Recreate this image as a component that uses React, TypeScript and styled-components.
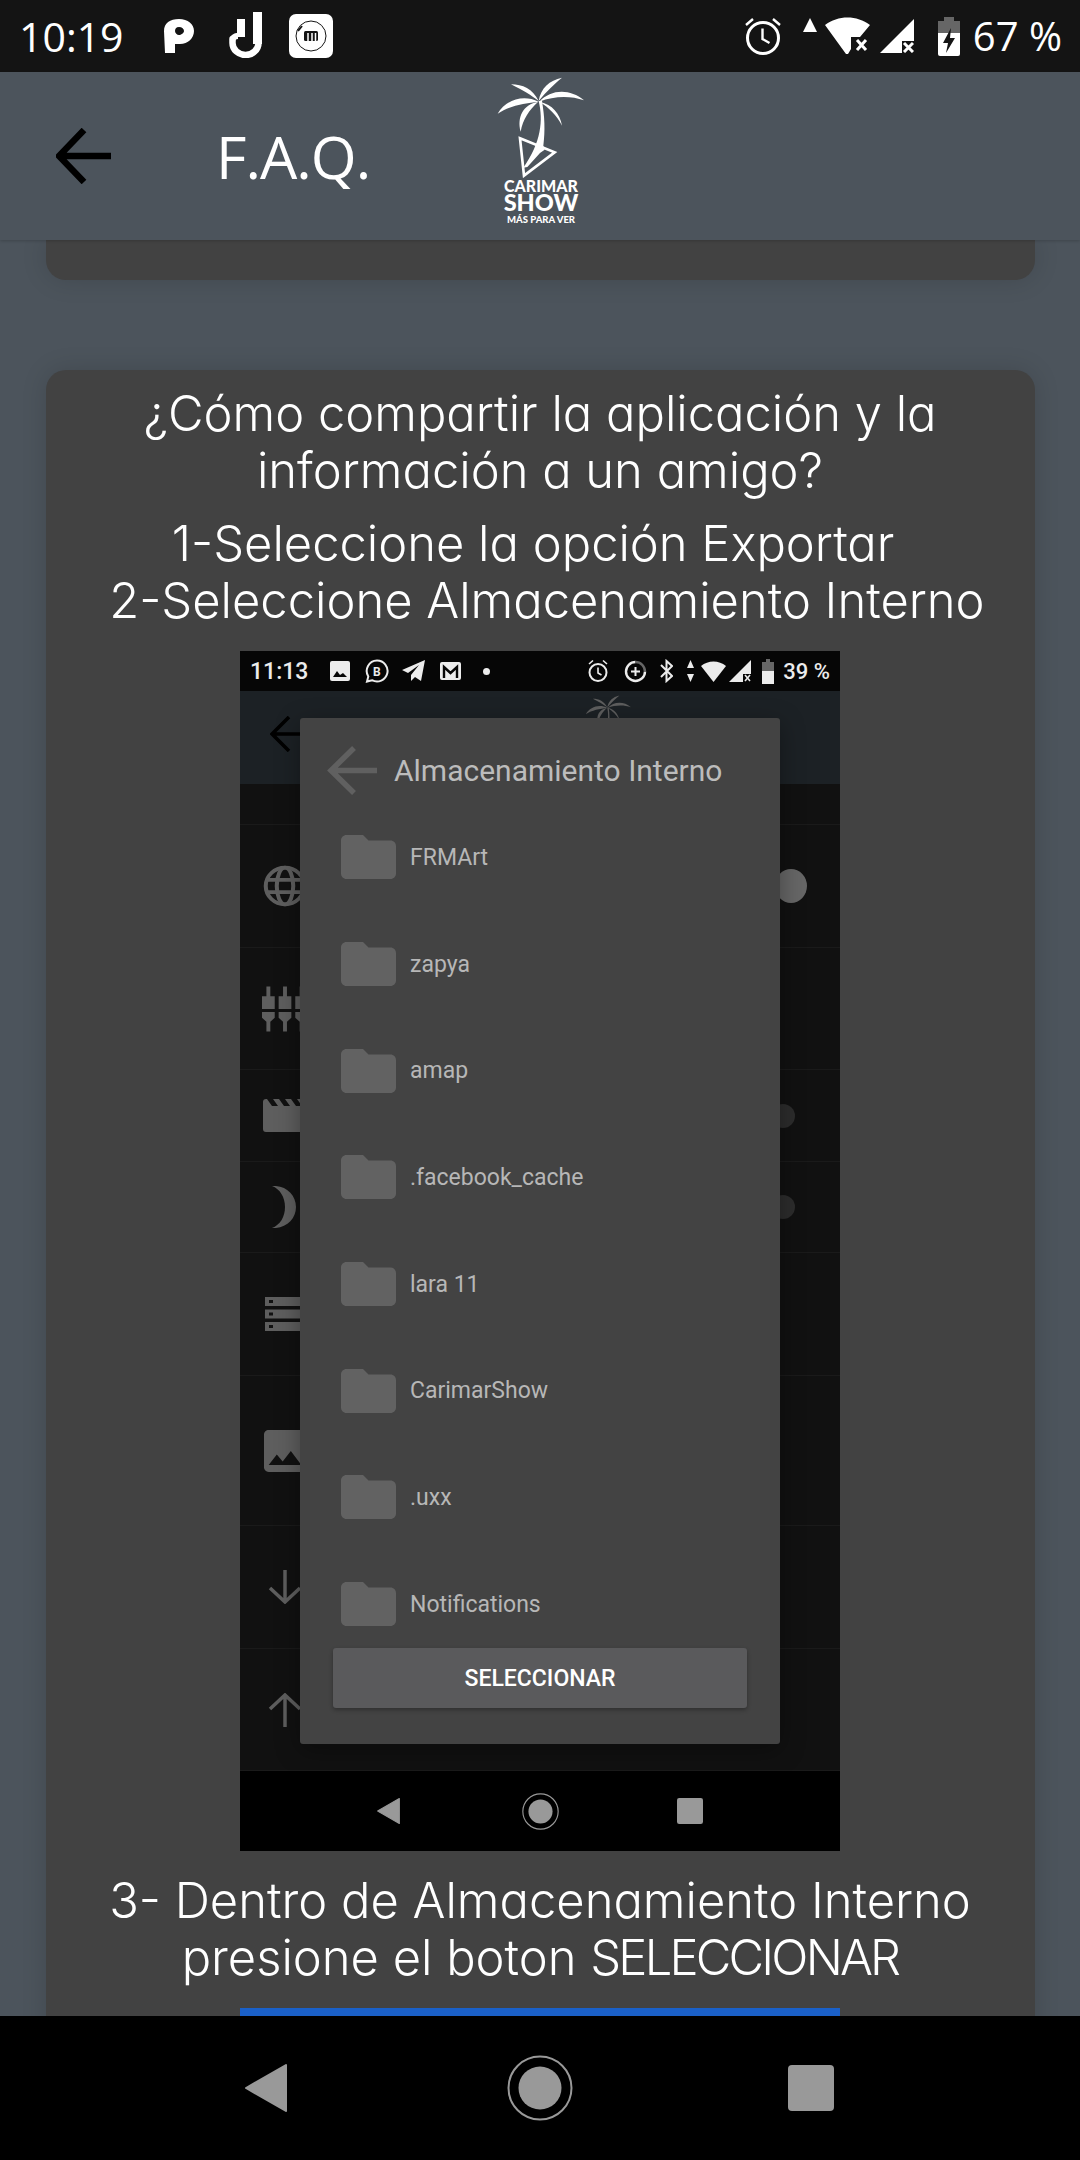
import React from 'react';
import styled, { createGlobalStyle } from 'styled-components';

const GlobalStyle = createGlobalStyle`
  html, body {
    margin: 0;
    padding: 0;
    background: #4c545c;
  }
  * {
    box-sizing: border-box;
  }
`;

const Screen = styled.div`
  width: 1080px;
  height: 2160px;
  display: flex;
  flex-direction: column;
  overflow: hidden;
  background: #4c545c;
  font-family: 'Open Sans', 'Noto Sans', sans-serif;
  color: #fff;
`;

const StatusBar = styled.div`
  height: 72px;
  flex: none;
  background: #141414;
  display: flex;
  align-items: center;
  padding: 0 18px 0 19px;
`;

const Clock = styled.span`
  font-family: 'Open Sans', sans-serif;
  font-size: 41px;
  line-height: 72px;
  width: 105px;
  white-space: nowrap;
`;

const Percent = styled.span`
  font-family: 'Open Sans', sans-serif;
  font-size: 40px;
  line-height: 72px;
  margin-left: 13px;
  white-space: pre;
`;

const StatusGlyph = styled.svg<{ $ml?: number }>`
  flex: none;
  margin-left: ${(p) => p.$ml ?? 0}px;
`;

const Spacer = styled.div`
  flex: 1;
`;

const Header = styled.header`
  height: 168px;
  flex: none;
  background: #4c545c;
  display: grid;
  grid-template-columns: 216px 280px 90px;
  align-items: center;
  position: relative;
  z-index: 2;
  box-shadow: 0 1px 3px rgba(0, 0, 0, 0.18);
`;

const BackButton = styled.div`
  padding-left: 56px;
  display: flex;
  align-items: center;
`;

const Title = styled.h1`
  margin: 0;
  font-family: 'Open Sans', sans-serif;
  font-weight: 400;
  font-size: 59px;
  letter-spacing: -1px;
  line-height: 1;
`;

const Logo = styled.div`
  display: flex;
  flex-direction: column;
  align-items: center;
  width: 90px;
  margin-top: -9px;
`;

const LogoLine = styled.span<{ $size: number; $h: number }>`
  font-family: Lato, 'Liberation Sans', sans-serif;
  font-weight: 900;
  font-size: ${(p) => p.$size}px;
  line-height: ${(p) => p.$h}px;
  white-space: nowrap;
`;

const Content = styled.main`
  flex: 1;
  min-height: 0;
  overflow: hidden;
  padding: 0 45px 0 46px;
`;

const PrevCard = styled.div`
  height: 40px;
  background: #424242;
  border-radius: 0 0 20px 20px;
  box-shadow: 0 0 26px rgba(0, 0, 0, 0.14);
`;

const Card = styled.section`
  margin-top: 90px;
  background: #424242;
  border-radius: 20px 20px 0 0;
  padding: 15px 1px 0 0;
  display: flex;
  flex-direction: column;
  align-items: center;
  box-shadow: 0 0 26px rgba(0, 0, 0, 0.14);
`;

const Copy = styled.p<{ $mt?: number }>`
  margin: ${(p) => p.$mt ?? 0}px 0 0;
  font-family: Inter, 'Noto Sans', sans-serif;
  font-feature-settings: 'cv11' 1;
  font-weight: 300;
  font-size: 48.9px;
  line-height: 57px;
  text-align: center;
  white-space: nowrap;
`;

const Caps = styled.span`
  letter-spacing: -2.8px;
`;

const Shot = styled.div`
  position: relative;
  margin-top: 22px;
  width: 600px;
  height: 1200px;
  flex: none;
  display: flex;
  flex-direction: column;
  background: #111;
  font-family: Roboto, sans-serif;
  overflow: hidden;
`;

const ShotStatus = styled.div`
  height: 40px;
  flex: none;
  background: #060606;
  display: flex;
  align-items: center;
  padding: 0 10px;
  color: #ececec;
`;

const ShotClock = styled.span`
  font-size: 23px;
  width: 60px;
  font-weight: 500;
`;

const ShotPercent = styled.span`
  font-size: 22px;
  font-weight: 500;
  margin-left: 9px;
  white-space: pre;
`;

const ShotHeader = styled.div`
  height: 93px;
  flex: none;
  background: #1c2125;
  display: grid;
  grid-template-columns: 315px 47px;
  padding-left: 30px;
  overflow: hidden;
`;

const ShotBack = styled.div`
  margin-top: 25px;
`;

const ShotPalm = styled.div`
  margin-top: 3px;
`;

const ShotRow = styled.div<{ $h: number }>`
  height: ${(p) => p.$h}px;
  flex: none;
  display: flex;
  align-items: center;
  padding-left: 22px;
  border-bottom: 1px solid #1a1a1a;
  color: #5e5e5e;
`;

const RowIcon = styled.div`
  width: 46px;
  display: flex;
  justify-content: center;
  flex: none;
`;

const Thumb = styled.div<{ $on?: boolean }>`
  margin-left: auto;
  margin-right: ${(p) => (p.$on ? 33 : 45)}px;
  width: ${(p) => (p.$on ? 32 : 24)}px;
  height: ${(p) => (p.$on ? 34 : 24)}px;
  border-radius: 50%;
  background: ${(p) => (p.$on ? '#666' : '#2c2c2c')};
`;

const ShotNav = styled.div`
  height: 80px;
  flex: none;
  background: #000;
  display: grid;
  grid-template-columns: repeat(3, 1fr);
  align-items: center;
  padding: 0 75px;
`;

const NavSlot = styled.div<{ $pr?: number }>`
  display: flex;
  justify-content: center;
  padding-right: ${(p) => p.$pr ?? 0}px;
`;

const Dialog = styled.div`
  position: absolute;
  top: 67px;
  left: 60px;
  width: 480px;
  height: 1026px;
  background: #434343;
  border-radius: 3px;
  box-shadow: 0 6px 24px rgba(0, 0, 0, 0.35);
  display: flex;
  flex-direction: column;
`;

const DialogHead = styled.div`
  height: 86px;
  flex: none;
  display: flex;
  align-items: center;
  padding: 18px 0 0 27px;
  gap: 17px;
`;

const DialogTitle = styled.span`
  font-size: 30px;
  color: #bcbcbc;
  white-space: nowrap;
`;

const FolderList = styled.div`
  flex: 1;
  min-height: 0;
  overflow: hidden;
`;

const FolderRow = styled.div`
  height: 106.7px;
  display: flex;
  align-items: center;
  padding-left: 41px;
  gap: 14px;
  font-size: 23px;
  color: #b7b7b7;
`;

const SelectButton = styled.button`
  flex: none;
  height: 60px;
  margin: 0 33px 36px;
  border: none;
  border-radius: 3px;
  background: #5a5a5c;
  color: #fff;
  font-family: Roboto, sans-serif;
  font-weight: 500;
  font-size: 23px;
  box-shadow: 0 2px 4px rgba(0, 0, 0, 0.3);
`;

const NavBar = styled.nav`
  height: 144px;
  flex: none;
  background: #000;
  display: grid;
  grid-template-columns: repeat(3, 1fr);
  align-items: center;
  padding: 0 134px;
  position: relative;
  z-index: 2;
`;

const BlueBar = styled.div`
  margin-top: 22px;
  width: 600px;
  height: 60px;
  flex: none;
  background: #1a60c8;
`;

const PALM_LEAVES = [
  'M178 92C185 52 210 30 248 22C226 40 202 62 178 92Z',
  'M178 92C160 56 130 42 95 42C130 60 155 74 178 92Z',
  'M180 94C215 56 272 54 314 90C275 76 225 76 180 94Z',
  'M178 94C130 70 78 90 55 130C90 106 135 98 178 94Z',
  'M176 95C132 102 112 140 124 184C130 148 150 118 176 95Z',
  'M182 95C218 102 242 130 248 166C232 134 208 112 182 95Z',
];

const FOLDERS = ['FRMArt', 'zapya', 'amap', '.facebook_cache', 'lara 11', 'CarimarShow', '.uxx', 'Notifications'];

const Folder = () => (
  <svg width="55" height="44" viewBox="2 4 20 16" preserveAspectRatio="none" style={{ flex: 'none' }}>
    <path fill="#626262" d="M10 4H4c-1.1 0-2 .9-2 2v12c0 1.1.9 2 2 2h16c1.1 0 2-.9 2-2V8c0-1.1-.9-2-2-2h-8l-2-2z" />
  </svg>
);

const Triangle = ({ w, h }: { w: number; h: number }) => (
  <svg width={w} height={h} viewBox="0 0 42 48">
    <path fill="#999" stroke="#999" strokeWidth="2" strokeLinejoin="round" d="M41 1L1 24l40 23z" />
  </svg>
);

const HomeRing = ({ size }: { size: number }) => (
  <svg width={size} height={size} viewBox="0 0 66 66">
    <circle cx="33" cy="33" r="31.5" fill="none" stroke="#999" strokeWidth="2" />
    <circle cx="33" cy="33" r="21.5" fill="#999" />
  </svg>
);

const SquareKey = ({ size }: { size: number }) => (
  <svg width={size} height={size} viewBox="0 0 46 46">
    <rect width="46" height="46" rx="4" fill="#999" />
  </svg>
);

const App: React.FC = () => {
  return (
    <Screen>
      <GlobalStyle />
      <StatusBar>
        <Clock>10:19</Clock>
        <StatusGlyph $ml={40} width="30" height="34" viewBox="0 0 30 34">
          <path fill="#fff" fillRule="evenodd" d="M0 12C0 4 6 0 15 0s15 5 15 12-6 13-14 13h-5v9H1zM11 12c0 2 2 4 4 4s5-2 5-4-2-4-5-4-4 2-4 4z" />
        </StatusGlyph>
        <StatusGlyph $ml={35} width="33" height="46" viewBox="0 0 33 46" style={{ marginTop: '-2px' }}>
          <path fill="none" stroke="#fff" strokeWidth="6.5" strokeLinecap="round" d="M3.5 27v4a13 12 0 0 0 26 0" />
          <path fill="#fff" d="M8 7h8v18H8zM24 0h9v32h-9z" />
          <path fill="#fff" d="M1 26c1-3 4-5 8-5v6c-2 0-3 1-3 3z" />
        </StatusGlyph>
        <StatusGlyph $ml={27} width="44" height="44" viewBox="0 0 44 44">
          <rect width="44" height="44" rx="7" fill="#fff" />
          <circle cx="22" cy="22" r="15" fill="none" stroke="#141414" strokeWidth="1" />
          <path stroke="#141414" strokeWidth="2" d="M13 12l-4 5" />
          <rect x="15" y="17" width="14" height="10" rx="1.5" fill="#141414" />
          <path stroke="#fff" strokeWidth="1.5" d="M19 19v8M23 19v8M26.5 19v8" />
        </StatusGlyph>
        <Spacer />
        <StatusGlyph width="38" height="38" viewBox="0 0 38 38">
          <circle cx="19" cy="21" r="15.5" fill="none" stroke="#fff" strokeWidth="3" />
          <path fill="none" stroke="#fff" strokeWidth="2.4" d="M18.5 11.5v10.5l7 4M2 8l7-6M36 8l-7-6" />
        </StatusGlyph>
        <StatusGlyph $ml={21} width="14" height="14" viewBox="0 0 14 14" style={{ marginTop: '-23px' }}>
          <path fill="#fff" d="M7 0l7 14H0z" />
        </StatusGlyph>
        <StatusGlyph $ml={8} width="46" height="38" viewBox="0 0 46 38">
          <path fill="#fff" d="M0 8C13-2 32-2 45 8L35 20h-9v12l-3 5h-2z" />
          <path stroke="#fff" strokeWidth="3" d="M32 23l9 10M41 23l-9 10" />
        </StatusGlyph>
        <StatusGlyph $ml={9} width="34" height="34" viewBox="0 0 34 34">
          <path fill="#fff" d="M34 0v22H22v12H0z" />
          <path stroke="#fff" strokeWidth="3" d="M24 24l9 9M33 24l-9 9" />
        </StatusGlyph>
        <StatusGlyph $ml={24} width="22" height="39" viewBox="0 0 22 39">
          <path fill="#666" d="M6 0h10v4h6v12H0V4h6z" />
          <path fill="#fff" d="M0 16h22v21a2 2 0 0 1-2 2H2a2 2 0 0 1-2-2z" />
          <path fill="#141414" d="M13 11l-8 15h5l-2 10 9-15h-5z" />
        </StatusGlyph>
        <Percent>67 %</Percent>
      </StatusBar>

      <Header>
        <BackButton>
          <svg width="56" height="56" viewBox="0 0 56 56" fill="none" stroke="#000" strokeWidth="6.5">
            <path d="M55 28H5M28 2L3 28l25 26" />
          </svg>
        </BackButton>
        <Title>F.A.Q.</Title>
        <Logo>
          <svg width="90" height="103" viewBox="50 14 270 309">
            {PALM_LEAVES.map((d) => (
              <path key={d} d={d} fill="#fff" />
            ))}
            <path fill="#fff" d="M178 92C192 150 186 215 132 292l12-2 38-42 14-10-4-12C198 180 196 140 188 92Z" />
            <path fill="none" stroke="#fff" strokeWidth="8" d="M122 204L226 246 134 316Z" />
          </svg>
          <LogoLine $size={16} $h={16}>CARIMAR</LogoLine>
          <LogoLine $size={23.5} $h={17}>SHOW</LogoLine>
          <LogoLine $size={9.5} $h={18}>MÁS PARA VER</LogoLine>
        </Logo>
      </Header>

      <Content>
        <PrevCard />
        <Card>
          <Copy>
            ¿Cómo compartir la aplicación y la
            <br />
            información a un amigo?
          </Copy>
          <Copy $mt={16}>
            1-Seleccione la opción Exportar{'\u00a0'}
            <br />
            {'\u00a0'}2-Seleccione Almacenamiento Interno
          </Copy>
          <Shot>
            <ShotStatus>
              <ShotClock>11:13</ShotClock>
              <StatusGlyph $ml={20} width="20" height="20" viewBox="0 0 20 20">
                <rect width="20" height="20" rx="2" fill="#ececec" />
                <path fill="#060606" d="M3 16l4-6 3 4 3-2 4 4z" />
              </StatusGlyph>
              <StatusGlyph $ml={15} width="24" height="24" viewBox="0 0 24 24">
                <path fill="none" stroke="#ececec" strokeWidth="2" d="M12 1.5a10.5 10.5 0 1 1-5 19.7L2 22.5l1.3-5A10.5 10.5 0 0 1 12 1.5z" />
                <text x="8" y="16.5" fontSize="12" fontWeight="700" fill="#ececec">B</text>
              </StatusGlyph>
              <StatusGlyph $ml={13} width="23" height="22" viewBox="0 0 23 22">
                <path fill="#ececec" d="M23 0L0 10l6 3 11-8-8 10v6l4-4 6 4z" />
              </StatusGlyph>
              <StatusGlyph $ml={15} width="21" height="18" viewBox="0 0 21 18">
                <rect width="21" height="18" rx="2" fill="#ececec" />
                <path fill="none" stroke="#060606" strokeWidth="2.4" d="M4 16V5l6.5 6L17 5v11" />
              </StatusGlyph>
              <StatusGlyph $ml={22} width="7" height="7" viewBox="0 0 7 7">
                <circle cx="3.5" cy="3.5" r="3.5" fill="#ececec" />
              </StatusGlyph>
              <Spacer />
              <StatusGlyph width="20" height="24" viewBox="0 0 20 24">
                <circle cx="10" cy="13.5" r="8.5" fill="none" stroke="#ececec" strokeWidth="2" />
                <path fill="none" stroke="#ececec" strokeWidth="1.6" d="M10 8.5v5.5l3.5 2M1 5l4-3.5M19 5l-4-3.5" />
              </StatusGlyph>
              <StatusGlyph $ml={16} width="23" height="23" viewBox="0 0 23 23">
                <path fill="none" stroke="#ececec" strokeWidth="2.4" d="M11.5 2a9.5 9.5 0 1 0 9.5 9.5" />
                <path fill="none" stroke="#666" strokeWidth="2.4" d="M11.5 2A9.5 9.5 0 0 1 21 11.5" />
                <path stroke="#ececec" strokeWidth="2" d="M7 11.5h9M11.5 7v9" />
              </StatusGlyph>
              <StatusGlyph $ml={13} width="13" height="24" viewBox="0 0 13 24">
                <path fill="none" stroke="#ececec" strokeWidth="2" d="M1 6l11 11-5.5 5V2L12 7 1 18" />
              </StatusGlyph>
              <StatusGlyph $ml={14} width="7" height="22" viewBox="0 0 7 22">
                <path fill="#ececec" d="M3.5 0L7 8H0zM3.5 22L0 14h7z" />
              </StatusGlyph>
              <StatusGlyph $ml={7} width="25" height="21" viewBox="0 0 25 21">
                <path fill="#ececec" d="M0 5C7-1 18-1 25 5L12.5 21z" />
              </StatusGlyph>
              <StatusGlyph $ml={3} width="22" height="22" viewBox="0 0 22 22">
                <path fill="#ececec" d="M22 0v14h-8v8H0z" />
                <path stroke="#ececec" strokeWidth="1.6" d="M16 15l5 6M21 15l-5 6" />
              </StatusGlyph>
              <StatusGlyph $ml={11} width="12" height="25" viewBox="0 0 12 25">
                <path fill="#666" d="M4 0h4v3h4v9H0V3h4z" />
                <path fill="#ececec" d="M0 12h12v13H0z" />
              </StatusGlyph>
              <ShotPercent>39 %</ShotPercent>
            </ShotStatus>
            <ShotHeader>
              <ShotBack>
                <svg width="40" height="36" viewBox="0 0 40 36" fill="none" stroke="#000" strokeWidth="3.5">
                  <path d="M40 18H3M19 1L2 18l17 17" />
                </svg>
              </ShotBack>
              <ShotPalm>
                <svg width="47" height="40" viewBox="50 14 270 230" fill="#5e5e5e">
                  {PALM_LEAVES.map((d) => (
                    <path key={d} d={d} />
                  ))}
                  <path d="M178 92C190 150 180 220 135 290l15-5C195 220 195 150 186 92Z" />
                </svg>
              </ShotPalm>
            </ShotHeader>
            <ShotRow $h={41} />
            <ShotRow $h={123}>
              <RowIcon>
                <svg width="44" height="42" viewBox="0 0 24 24" fill="none" stroke="currentColor" strokeWidth="2.2" preserveAspectRatio="none">
                  <circle cx="12" cy="12" r="10.5" />
                  <ellipse cx="12" cy="12" rx="4.5" ry="10.5" />
                  <path d="M2 8.5h20M2 15.5h20" />
                </svg>
              </RowIcon>
              <Thumb $on />
            </ShotRow>
            <ShotRow $h={122}>
              <RowIcon>
                <svg width="47" height="46" viewBox="0 0 47 46" fill="currentColor">
                  <path d="M4.5 0h4v10H13v13H0V10h4.5zM0 26h13v6l-4.5 4v10h-4V36L0 32zM21.5 0h4v10H30v13H17V10h4.5zM17 26h13v6l-4.5 4v10h-4V36L17 32zM38.5 0h4v10H47v13H34V10h4.5zM34 26h13v6l-4.5 4v10h-4V36L34 32z" />
                </svg>
              </RowIcon>
            </ShotRow>
            <ShotRow $h={92}>
              <RowIcon>
                <svg width="46" height="33" viewBox="0 0 46 33" fill="currentColor">
                  <path d="M1 3a3 3 0 0 1 3-3h1l5 7h6L11 0h6l5 7h6l-5-7h6l5 7h6l-5-7h5a3 3 0 0 1 3 3v27a3 3 0 0 1-3 3H4a3 3 0 0 1-3-3z" />
                </svg>
              </RowIcon>
              <Thumb />
            </ShotRow>
            <ShotRow $h={91}>
              <RowIcon>
                <svg width="46" height="42" viewBox="0 0 46 42" fill="currentColor">
                  <path d="M10 0c14-1 24 9 24 21S24 43 10 42c8-3 13-11 13-21S18 3 10 0z" />
                </svg>
              </RowIcon>
              <Thumb />
            </ShotRow>
            <ShotRow $h={123}>
              <RowIcon>
                <svg width="46" height="34" viewBox="0 0 46 34">
                  <path fill="currentColor" d="M3 0h42v9H3zM3 12.5h42v9H3zM3 25h42v9H3z" />
                  <path fill="#111" d="M7 3h4v3H7zM7 15.5h4v3H7zM7 28h4v3H7z" />
                </svg>
              </RowIcon>
            </ShotRow>
            <ShotRow $h={150}>
              <RowIcon>
                <svg width="42" height="42" viewBox="3 3 18 18" fill="currentColor">
                  <path d="M21 19V5c0-1.1-.9-2-2-2H5c-1.1 0-2 .9-2 2v14c0 1.1.9 2 2 2h14c1.1 0 2-.9 2-2zM8.5 13.5l2.5 3.01L14.5 12l4.5 6H5l3.5-4.5z" fillRule="evenodd" />
                </svg>
              </RowIcon>
            </ShotRow>
            <ShotRow $h={123}>
              <RowIcon>
                <svg width="34" height="34" viewBox="0 0 34 34" fill="none" stroke="currentColor" strokeWidth="3.5">
                  <path d="M17 0v32M2 18l15 14 15-14" />
                </svg>
              </RowIcon>
            </ShotRow>
            <ShotRow $h={122}>
              <RowIcon>
                <svg width="34" height="34" viewBox="0 0 34 34" fill="none" stroke="currentColor" strokeWidth="3.5">
                  <path d="M17 34V2M2 16L17 2l15 14" />
                </svg>
              </RowIcon>
            </ShotRow>
            <ShotNav>
              <NavSlot $pr={3}>
                <Triangle w={23} h={26} />
              </NavSlot>
              <NavSlot>
                <HomeRing size={37} />
              </NavSlot>
              <NavSlot>
                <SquareKey size={26} />
              </NavSlot>
            </ShotNav>
            <Dialog>
              <DialogHead>
                <svg width="50" height="49" viewBox="0 0 50 49" fill="none" stroke="#606060" strokeWidth="5.5">
                  <path d="M50 24.5H5M27 2L4 24.5 27 47" />
                </svg>
                <DialogTitle>Almacenamiento Interno</DialogTitle>
              </DialogHead>
              <FolderList>
                {FOLDERS.map((name) => (
                  <FolderRow key={name}>
                    <Folder />
                    {name}
                  </FolderRow>
                ))}
              </FolderList>
              <SelectButton>SELECCIONAR</SelectButton>
            </Dialog>
          </Shot>
          <Copy $mt={21}>
            3-{'\u00a0'}Dentro de Almacenamiento Interno
            <br />
            presione el boton <Caps>SELECCIONAR</Caps>
          </Copy>
          <BlueBar />
        </Card>
      </Content>

      <NavBar>
        <NavSlot $pr={6}>
          <Triangle w={42} h={48} />
        </NavSlot>
        <NavSlot>
          <HomeRing size={66} />
        </NavSlot>
        <NavSlot>
          <SquareKey size={46} />
        </NavSlot>
      </NavBar>
    </Screen>
  );
};

export default App;
